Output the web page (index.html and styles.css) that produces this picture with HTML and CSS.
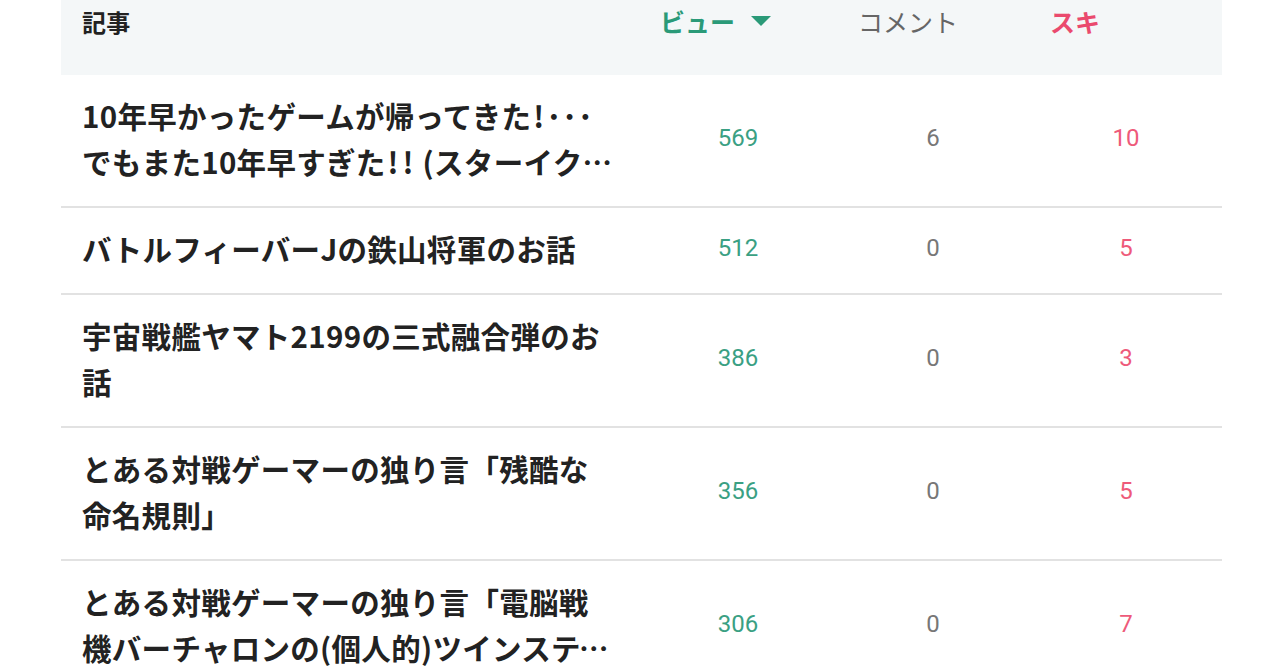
FILE: index.html
```html
<!DOCTYPE html>
<html lang="ja">
<head>
    <meta charset="UTF-8">
    <meta name="viewport" content="width=device-width, initial-scale=1.0">
    <title>記事ごとのアクセス</title>
    <link rel="stylesheet" href="styles.css">
</head>
<body>
    <div class="stats">
        <div class="row head">
            <div class="cell title">記事</div>
            <div class="cell view">ビュー <span class="arrow"></span></div>
            <div class="cell comment">コメント</div>
            <div class="cell like">スキ</div>
        </div>
        <div class="row">
            <div class="cell title">
                <span class="line">10年早かったゲームが帰ってきた<span class="bang">!</span><span class="dots">･･･</span></span>
                <span class="line cut">でもまた10年早すぎた<span class="bang">!</span><span class="bang">!</span> (スターイクシオン)</span>
            </div>
            <div class="cell num view">569</div>
            <div class="cell num comment">6</div>
            <div class="cell num like">10</div>
        </div>
        <div class="row">
            <div class="cell title">
                <span class="line">バトルフィーバーJの鉄山将軍のお話</span>
            </div>
            <div class="cell num view">512</div>
            <div class="cell num comment">0</div>
            <div class="cell num like">5</div>
        </div>
        <div class="row">
            <div class="cell title">
                <span class="line">宇宙戦艦ヤマト2199の三式融合弾のお</span>
                <span class="line cut">話</span>
            </div>
            <div class="cell num view">386</div>
            <div class="cell num comment">0</div>
            <div class="cell num like">3</div>
        </div>
        <div class="row">
            <div class="cell title">
                <span class="line">とある対戦ゲーマーの独り言「残酷な</span>
                <span class="line cut">命名規則」</span>
            </div>
            <div class="cell num view">356</div>
            <div class="cell num comment">0</div>
            <div class="cell num like">5</div>
        </div>
        <div class="row">
            <div class="cell title">
                <span class="line">とある対戦ゲーマーの独り言「電脳戦</span>
                <span class="line cut">機バーチャロンの(個人的)ツインスティック論」</span>
            </div>
            <div class="cell num view">306</div>
            <div class="cell num comment">0</div>
            <div class="cell num like">7</div>
        </div>
    </div>
</body>
</html>
```

FILE: styles.css
```css
body{
    margin: 0;
    background: #fff;
    font-family: "Noto Sans CJK JP", "Noto Sans", sans-serif;
    color: #222;
}
.stats{
    width: 1161px;
    margin-left: 61px;
}
.row{
    display: grid;
    grid-template-columns: 536px 156px 150px 152px;
    column-gap: 42px;
    align-items: center;
    padding: 17px 20px 22px 21px;
    border-bottom: 2px solid #e2e2e2;
}
.row.head{
    height: 75px;
    box-sizing: border-box;
    align-items: start;
    padding-top: 1px;
    padding-bottom: 0;
    background: #f4f7f8;
    border-bottom: none;
    font-size: 25px;
    line-height: 40px;
}
.head .title{
    font-weight: bold;
    font-size: 24px;
    line-height: 42px;
    color: #222;
}
.head .view{
    color: #2a9a78;
    font-weight: bold;
    display: flex;
    align-items: center;
}
.head .comment{
    color: #666;
}
.head .like{
    color: #ea4a6e;
    font-weight: bold;
}
.arrow{
    display: inline-block;
    width: 0;
    height: 0;
    margin-left: 16px;
    border-left: 10px solid transparent;
    border-right: 10px solid transparent;
    border-top: 10px solid #2a9a78;
}
.title{
    font-size: 29.5px;
    font-weight: bold;
    line-height: 46px;
    letter-spacing: 0.3px;
}
.line{
    display: block;
    white-space: nowrap;
}
.line.cut{
    width: 534px;
    overflow: hidden;
    text-overflow: ellipsis;
}
.bang{
    display: inline-block;
    width: 15px;
    text-align: center;
}
.dots{
    letter-spacing: 1px;
}
.num{
    text-align: center;
    font-family: Roboto, "Noto Sans", sans-serif;
    font-size: 24px;
}
.num.view{
    color: #3aa083;
}
.num.comment{
    color: #777;
}
.num.like{
    color: #ee5a7a;
}
```
